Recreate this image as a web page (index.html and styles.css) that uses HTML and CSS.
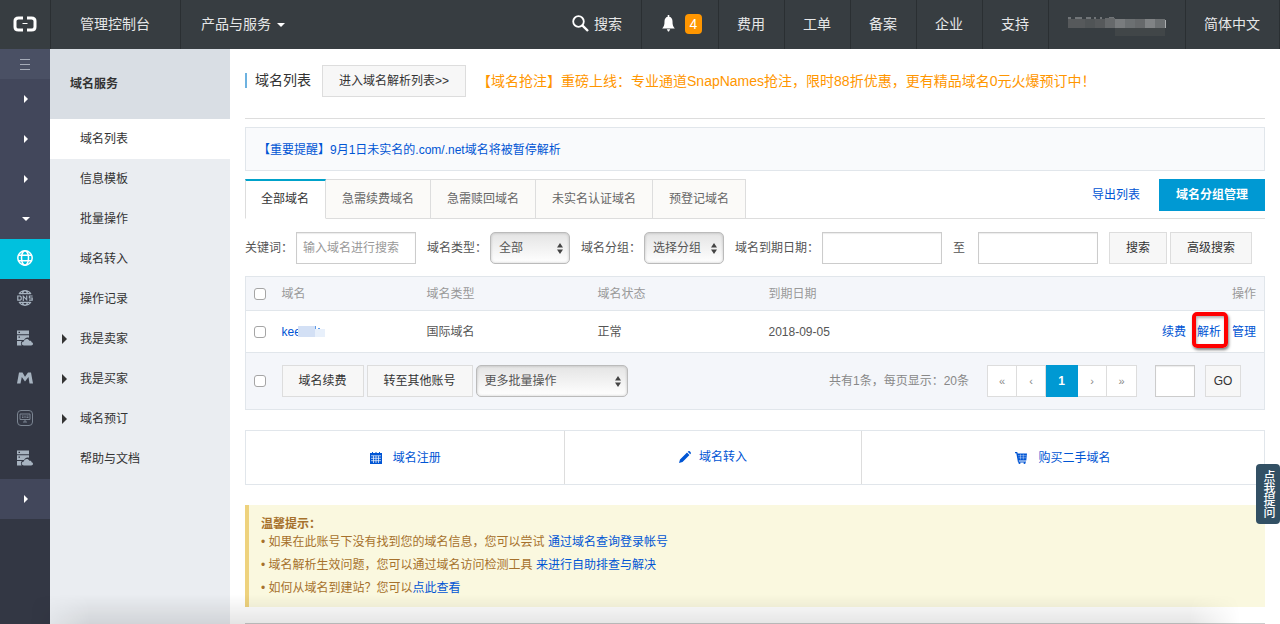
FILE: index.html
```html
<!DOCTYPE html>
<html lang="zh-CN">
<head>
    <meta charset="UTF-8">
    <meta name="viewport" content="width=device-width, initial-scale=1.0">
    <title>域名列表 - 管理控制台</title>
    <link rel="stylesheet" href="styles.css">
</head>
<body>
    <!-- shared icons -->
    <svg class="sprite" aria-hidden="true">
        <symbol id="icon-server" viewBox="0 0 16 16">
            <path fill="currentColor" fill-rule="evenodd" d="M0 .5h12v3.800H0zM1.500 1.800v1.300h1.500V1.800zM0 5.300h12v2.400c-2-.8-4.200.2-4.900 2.300H0zM1.500 6.500v1.300h1.500V6.500zM0 11h4.800c-1 1-1.200 3-.2 4.500H0z"/>
            <path fill="currentColor" d="M7 15.500c-3 0-3-3.800-.2-4 .5-3.200 4.700-3.400 5.500-.7 1.300-.5 2.300.3 2.300 1.500 2 .3 1.900 3.200-.5 3.200z"/>
        </symbol>
    </svg>

    <header class="topbar">
        <a href="#" class="topbar-item logo" aria-label="首页">
            <svg width="24" height="16" viewBox="0 0 24 16">
                <path fill="none" stroke="#fff" stroke-width="3" d="M10 2H5.500Q2 2 2 5v6q0 3 3.500 3H10M14 2h4.500Q22 2 22 5v6q0 3-3.500 3H14"/>
                <path fill="none" stroke="#fff" stroke-width="1" d="M9.500 7.500h5"/>
            </svg>
        </a>
        <a href="#" class="topbar-item console">管理控制台</a>
        <a href="#" class="topbar-item products">产品与服务<span class="caret-down"></span></a>
        <nav class="topbar-right">
            <a href="#" class="topbar-item search">
                <svg width="17" height="17" viewBox="0 0 17 17">
                    <circle cx="6.500" cy="6.500" r="5.300" fill="none" stroke="#fff" stroke-width="1.800"/>
                    <path d="M10.300 10.300L16 16" stroke="#fff" stroke-width="2.400"/>
                </svg>
                搜索
            </a>
            <a href="#" class="topbar-item message" aria-label="消息">
                <svg width="13" height="17" viewBox="0 0 13 17">
                    <path fill="#fff" d="M5.700 0h1.600v1.700c2.300.5 3.200 2.300 3.200 4.600 0 3.700.5 5 2.300 7.200H.2C2 11.300 2.500 10 2.500 6.300c0-2.300 1-4.100 3.200-4.600zM4.800 14.300h3.400L7 16.500H6z"/>
                </svg>
                <span class="badge">4</span>
            </a>
            <a href="#" class="topbar-item">费用</a>
            <a href="#" class="topbar-item">工单</a>
            <a href="#" class="topbar-item">备案</a>
            <a href="#" class="topbar-item">企业</a>
            <a href="#" class="topbar-item">支持</a>
            <a href="#" class="topbar-item account" aria-label="账号">
                <svg width="100" height="27" viewBox="0 -7 100 27">
                    <path d="M1 1h3M8 1h7M19 1h5M27 1h2M33 1h2M42 1h5" stroke="#aaadaf"/>
                    <path fill="#56595b" d="M1 2h17v9H1zM28 2h10v9H28z"/>
                    <path fill="#505456" d="M18 2h10v9H18z"/>
                    <path fill="#66696b" d="M38 1h10v10H38zM68 2h10v9H68z"/>
                    <path fill="#797c7e" d="M48 2h10v9H48z"/>
                    <path fill="#6c7072" d="M58 2h10v9H58zM88 2h10v9H88z"/>
                    <path fill="#808385" d="M78 2h10v9H78z"/>
                    <path fill="#414648" d="M48 11h50v8H48z"/>
                    <path d="M98.500 3v8" stroke="#aaadaf"/>
                </svg>
            </a>
            <a href="#" class="topbar-item lang">简体中文</a>
        </nav>
    </header>

    <div class="layout">
        <nav class="rail" aria-label="产品导航">
            <button class="rail-fold" type="button" aria-label="收起">
                <svg width="10" height="11" viewBox="0 0 10 11"><path d="M0 .5h10M0 5.500h10M0 10.500h10" stroke="#a5abb8"/></svg>
            </button>
            <a href="#" class="rail-group" aria-label="分组一"><span class="caret-right"></span></a>
            <a href="#" class="rail-group" aria-label="分组二"><span class="caret-right"></span></a>
            <a href="#" class="rail-group" aria-label="分组三"><span class="caret-right"></span></a>
            <a href="#" class="rail-group" aria-label="分组四"><span class="caret-down"></span></a>
            <a href="#" class="rail-item active" aria-label="域名">
                <svg width="16" height="16" viewBox="0 0 16 16" fill="none" stroke="currentColor" stroke-width="1.500">
                    <circle cx="8" cy="8" r="7.200"/>
                    <ellipse cx="8" cy="8" rx="3.500" ry="7.200"/>
                    <path d="M1.500 5.300h13M1.500 10.700h13"/>
                </svg>
            </a>
            <a href="#" class="rail-item" aria-label="DNS">
                <svg width="16" height="16" viewBox="0 0 16 16" fill="none" stroke="currentColor" stroke-width="1.200">
                    <path d="M2 4C3.300 2 5.300.7 8 .7S12.700 2 14 4M2 12c1.300 2 3.300 3.300 6 3.300s4.700-1.300 6-3.300M2.500 3.700h11M2.500 12.300h11M5.300 4c.5-1.800 1.400-3.300 2.700-3.300s2.200 1.500 2.700 3.300M5.300 12c.5 1.800 1.400 3.300 2.700 3.300s2.200-1.500 2.700-3.300"/>
                    <path d="M.8 6v4.200h2.400l1-1V7l-1-1zM6.300 11V6.200l3.400 3.600V5.500M15.600 6h-3.200v2h2.800v2.200h-3.200"/>
                </svg>
            </a>
            <a href="#" class="rail-item" aria-label="云虚拟主机"><svg width="16" height="16"><use href="#icon-server"/></svg></a>
            <a href="#" class="rail-item" aria-label="邮箱">
                <svg width="16" height="12" viewBox="0 0 16 12">
                    <path fill="currentColor" d="M0 11.500L2 .5h3.500L8 4.800 11 .5h3l2 11h-3.500L11.500 5 8 9.500 4.800 5 3.500 11.500z"/>
                </svg>
            </a>
            <a href="#" class="rail-item dim" aria-label="建站">
                <svg width="16" height="16" viewBox="0 0 16 16" fill="none" stroke="currentColor">
                    <rect x=".5" y=".5" width="15" height="15" rx="3.500"/>
                    <path d="M3 4h10v5.500H3zM5 6h1.500M5 7.500h1.500M8 5.500v2.500M9.500 6h2M9.500 7.500h2M6 12h4M8 10v2"/>
                </svg>
            </a>
            <a href="#" class="rail-item" aria-label="弹性主机"><svg width="16" height="16"><use href="#icon-server"/></svg></a>
            <a href="#" class="rail-group" aria-label="分组五"><span class="caret-right"></span></a>
        </nav>

        <aside class="sidebar">
            <h2>域名服务</h2>
            <ul>
                <li><a href="#" class="active">域名列表</a></li>
                <li><a href="#">信息模板</a></li>
                <li><a href="#">批量操作</a></li>
                <li><a href="#">域名转入</a></li>
                <li><a href="#">操作记录</a></li>
                <li><a href="#" class="has-sub">我是卖家</a></li>
                <li><a href="#" class="has-sub">我是买家</a></li>
                <li><a href="#" class="has-sub">域名预订</a></li>
                <li><a href="#">帮助与文档</a></li>
            </ul>
        </aside>

        <main class="content">
            <div class="page-head">
                <h1>域名列表</h1>
                <button class="btn" type="button">进入域名解析列表&gt;&gt;</button>
                <a href="#" class="promo">【域名抢注】重磅上线：专业通道SnapNames抢注，限时88折优惠，更有精品域名0元火爆预订中！</a>
            </div>

            <div class="alert"><a href="#">【重要提醒】9月1日未实名的.com/.net域名将被暂停解析</a></div>

            <div class="tabs">
                <a href="#" class="tab active">全部域名</a>
                <a href="#" class="tab">急需续费域名</a>
                <a href="#" class="tab">急需赎回域名</a>
                <a href="#" class="tab">未实名认证域名</a>
                <a href="#" class="tab">预登记域名</a>
                <div class="tabs-right">
                    <a href="#">导出列表</a>
                    <button class="btn btn-primary" type="button">域名分组管理</button>
                </div>
            </div>

            <form class="filter">
                <div class="field">
                    <label for="keyword">关键词：</label>
                    <input type="text" id="keyword" placeholder="输入域名进行搜索">
                </div>
                <div class="field">
                    <label for="type">域名类型：</label>
                    <select id="type"><option>全部</option></select>
                </div>
                <div class="field">
                    <label for="group">域名分组：</label>
                    <select id="group"><option>选择分组</option></select>
                </div>
                <div class="field">
                    <label for="dateFrom">域名到期日期：</label>
                    <input type="text" id="dateFrom">
                </div>
                <div class="field date-to">
                    <label for="dateTo">至</label>
                    <input type="text" id="dateTo">
                </div>
                <div class="field">
                    <button class="btn" type="button">搜索</button>
                    <button class="btn" type="button">高级搜索</button>
                </div>
            </form>

            <table class="domains">
                <thead>
                    <tr>
                        <th class="col-check"><input type="checkbox" aria-label="全选"></th>
                        <th class="col-name">域名</th>
                        <th class="col-info">域名类型</th>
                        <th class="col-info">域名状态</th>
                        <th class="col-info">到期日期</th>
                        <th class="col-action">操作</th>
                    </tr>
                </thead>
                <tbody>
                    <tr>
                        <td class="col-check"><input type="checkbox" aria-label="选择域名"></td>
                        <td><a href="#" class="domain">kee<svg width="27" height="13" viewBox="0 0 27 13"><path fill="#d3e0f5" d="M0 1h17v11H0z"/><path fill="#e8f0fb" d="M17 4h10v8H17z"/><path fill="#5f9be8" d="M17 1h1v3h-1zM20 3h2v1h-2z"/></svg></a></td>
                        <td>国际域名</td>
                        <td>正常</td>
                        <td>2018-09-05</td>
                        <td class="col-action">
                            <div class="actions">
                                <a href="#">续费</a>
                                <a href="#" class="marked">解析</a>
                                <a href="#">管理</a>
                            </div>
                        </td>
                    </tr>
                </tbody>
                <tfoot>
                    <tr>
                        <td class="col-check"><input type="checkbox" aria-label="全选本页"></td>
                        <td colspan="5">
                            <div class="table-foot">
                                <button class="btn" type="button">域名续费</button>
                                <button class="btn" type="button">转至其他账号</button>
                                <select class="batch" aria-label="更多批量操作"><option>更多批量操作</option></select>
                                <span class="total">共有1条，每页显示：20条</span>
                                <div class="pager">
                                    <a href="#">«</a>
                                    <a href="#">‹</a>
                                    <a href="#" class="active">1</a>
                                    <a href="#">›</a>
                                    <a href="#">»</a>
                                </div>
                                <input type="text" class="page-input" aria-label="页码">
                                <button class="btn btn-go" type="button">GO</button>
                            </div>
                        </td>
                    </tr>
                </tfoot>
            </table>

            <div class="shortcuts">
                <a href="#">
                    <svg width="12" height="12" viewBox="0 0 12 12">
                        <path fill="currentColor" d="M0 1h2V0h1v1h2.500V0h1v1H9V0h1v1h2v11H0z"/>
                        <path stroke="#fff" stroke-width=".7" d="M1 3.800h10M1 6.300h10M1 8.700h10M3.500 3.800V11M6 3.800V11M8.500 3.800V11"/>
                    </svg>
                    域名注册
                </a>
                <a href="#" class="transfer">
                    <svg width="12" height="12" viewBox="0 0 12 12">
                        <path fill="currentColor" d="M8 1.500L10.500 4l-7 7L0 12l1-3.500zM8.700.8q1.300-1.500 2.600-.1T11.200 3.300z"/>
                    </svg>
                    域名转入
                </a>
                <a href="#">
                    <svg width="12" height="12" viewBox="0 0 12 12">
                        <path fill="currentColor" d="M0 0h2.200l.5 1.500H12L11.300 8.500H3.800v1h7.200v1H3L1.300 1.200H0z"/>
                        <circle cx="4.500" cy="11" r="1" fill="currentColor"/>
                        <circle cx="9.500" cy="11" r="1" fill="currentColor"/>
                        <path stroke="#fff" stroke-width=".4" d="M3 3.700h8.500M3.500 5.800h7.800M5.500 2.300V7.500M8.300 2.300V7.500"/>
                    </svg>
                    购买二手域名
                </a>
            </div>

            <div class="notice">
                <strong>温馨提示：</strong>
                <ul>
                    <li>• 如果在此账号下没有找到您的域名信息，您可以尝试 <a href="#">通过域名查询登录帐号</a></li>
                    <li>• 域名解析生效问题，您可以通过域名访问检测工具 <a href="#">来进行自助排查与解决</a></li>
                    <li>• 如何从域名到建站？您可以<a href="#">点此查看</a></li>
                </ul>
            </div>
            <hr>
        </main>
    </div>

    <button class="ask" type="button">点我提问</button>
    <div class="bottom-shade"></div>
</body>
</html>
```

FILE: styles.css
```css
* {
    margin: 0;
    padding: 0;
    box-sizing: border-box;
}
body {
    font-family: "Liberation Sans", "Noto Sans CJK SC", sans-serif;
    font-size: 12px;
    line-height: 18px;
    color: #555;
    background: #fff;
    min-height: 100vh;
    display: flex;
    flex-direction: column;
}
a {
    color: #0055d4;
    text-decoration: none;
}
ul {
    list-style: none;
}
svg {
    flex: none;
}
button, input, select {
    font: inherit;
}
.sprite {
    position: absolute;
    width: 0;
    height: 0;
}

/* top bar */
.topbar {
    display: flex;
    height: 49px;
    background: #373d41;
    font-size: 14px;
}
.topbar-right {
    display: flex;
    margin-left: auto;
}
.topbar-item {
    display: flex;
    align-items: center;
    justify-content: center;
    padding: 0 19px 2px 18px;
    color: #e6e7e8;
    white-space: nowrap;
    border-right: 1px solid #2a2f32;
}
.logo {
    width: 51px;
    padding: 0 1px 2px 0;
}
.console {
    padding: 0 30px 2px 29px;
}
.products {
    padding-left: 20px;
    border-right: none;
}
.search {
    gap: 5px;
}
.message {
    gap: 10px;
    padding: 0 16px 2px 20px;
}
.badge {
    width: 17px;
    line-height: 20px;
    text-align: center;
    color: #fff;
    background: #ff9600;
    border-radius: 4px;
}
.account {
    padding: 0 18px 2px;
}
.caret-down {
    border: 4px solid transparent;
    border-top-color: #fff;
    border-bottom: none;
}
.caret-right {
    border: 4px solid transparent;
    border-left-color: #fff;
    border-right: none;
}
.products .caret-down {
    margin: 2px 0 0 6px;
}

.layout {
    display: flex;
    flex: 1;
}

/* icon rail */
.rail {
    width: 50px;
    flex: none;
    background: #333744;
}
.rail-fold, .rail-group, .rail-item {
    display: flex;
    align-items: center;
    justify-content: center;
    width: 100%;
    height: 40px;
}
.rail-fold {
    height: 30px;
    border: none;
    background: #4a5064;
}
.rail-group {
    padding-left: 2px;
    background: #42475b;
}
.rail-item {
    padding-bottom: 2px;
    color: #a7b3c0;
}
.rail-item.dim {
    color: #7b8491;
}
.rail-item.active {
    color: #fff;
    background: #00c1de;
}

/* product menu */
.sidebar {
    width: 180px;
    flex: none;
    background: #eaedf1;
}
.sidebar h2 {
    padding-left: 20px;
    font-size: 12px;
    line-height: 70px;
    color: #333;
    background: #d9dee4;
}
.sidebar a {
    display: flex;
    align-items: center;
    height: 40px;
    padding-left: 30px;
    color: #333;
}
.sidebar a.active {
    background: #fff;
}
.sidebar a.has-sub {
    padding-left: 12px;
}
.sidebar a.has-sub::before {
    content: "";
    margin-right: 13px;
    border: 5px solid transparent;
    border-left-color: #333;
    border-right: none;
}

/* content */
.content {
    flex: 1;
    min-width: 0;
    padding: 0 15px;
}
.btn {
    height: 32px;
    padding: 0 16px;
    color: #333;
    background: #f7f7f7;
    border: 1px solid #ddd;
    white-space: nowrap;
}
.btn-primary {
    color: #fff;
    font-weight: bold;
    background: #0099d3;
    border-color: #0099d3;
}
.page-head {
    display: flex;
    align-items: center;
    gap: 11px;
    height: 70px;
    padding-bottom: 6px;
    border-bottom: 1px solid #ddd;
}
.page-head h1 {
    padding-left: 8px;
    font-size: 14px;
    font-weight: normal;
    line-height: 15px;
    color: #333;
    border-left: 2px solid #6db2e0;
}
.promo {
    font-size: 14px;
    color: #ff9600;
    white-space: nowrap;
}
.alert {
    margin-top: 8px;
    padding: 13px 12px 11px;
    background: #f9fafc;
    border: 1px solid #e1e6eb;
}
.tabs {
    display: flex;
    margin-top: 8px;
    border-bottom: 1px solid #ddd;
}
.tab {
    height: 40px;
    margin-bottom: -1px;
    padding: 0 16px;
    line-height: 38px;
    color: #666;
    background: #fbfaf8;
    border: 1px solid #ddd;
    border-left: none;
    white-space: nowrap;
}
.tab.active {
    padding-left: 15px;
    line-height: 36px;
    color: #333;
    background: #fff;
    border-top: 2px solid #00a2ca;
    border-left: 1px solid #ddd;
    border-bottom-color: #fff;
}
.tabs-right {
    display: flex;
    align-items: center;
    align-self: flex-start;
    gap: 19px;
    margin-left: auto;
}

/* form controls */
input[type="text"], select {
    width: 120px;
    height: 32px;
    padding: 0 6px;
    color: #555;
    background: #fff;
    border: 1px solid #ccc;
    box-shadow: inset 0 1px 1px rgba(0, 0, 0, 0.08);
}
input::placeholder {
    color: #999;
}
select {
    width: 80px;
    padding: 0 8px;
    appearance: none;
    background: url("data:image/svg+xml,%3Csvg xmlns='http://www.w3.org/2000/svg' width='6' height='11'%3E%3Cpath fill='%23444' d='M3 0l3 4.500H0zM3 11L0 6.500h6z'/%3E%3C/svg%3E") no-repeat right 6px center, linear-gradient(#e4e4e4, #fff);
    border-color: #bbb;
    border-radius: 5px;
    box-shadow: inset 0 0 3px rgba(0, 0, 0, 0.2);
}
input[type="checkbox"] {
    display: block;
    width: 12px;
    height: 12px;
    appearance: none;
    background: #fff;
    border: 1px solid #a5a5a5;
    border-radius: 3px;
}
.filter {
    display: flex;
    align-items: center;
    gap: 11px;
    margin: 13px 0 12px;
}
.field {
    display: flex;
    align-items: center;
    gap: 3px;
}
.field.date-to {
    gap: 13px;
}

/* domain table */
.domains {
    width: 100%;
    table-layout: fixed;
    border-collapse: collapse;
    border: 1px solid #e1e6eb;
}
.domains th, .domains td {
    height: 42px;
    text-align: left;
    border-bottom: 1px solid #e1e6eb;
}
.domains th {
    height: 34px;
    font-weight: normal;
    color: #999;
}
.domains thead, .domains tfoot {
    background: #f4f6fa;
}
.domains .col-check {
    width: 36px;
    padding-left: 8px;
}
.col-name {
    width: 145px;
}
.col-info {
    width: 171px;
}
.domains .col-action {
    padding-right: 8px;
    text-align: right;
}
.domains tfoot td {
    height: 57px;
}
.domain {
    display: flex;
    align-items: center;
}
.domain svg {
    margin-left: -3px;
}
.actions {
    display: flex;
    justify-content: flex-end;
    gap: 11px;
}
.marked {
    position: relative;
}
.marked::after {
    content: "";
    position: absolute;
    inset: -11px -7px -7px -5px;
    border: 4px solid #f00;
    border-radius: 5px;
    box-shadow: 1px 2px 3px rgba(0, 0, 0, 0.5), inset 1px 2px 3px rgba(0, 0, 0, 0.3);
}
.table-foot {
    display: flex;
    align-items: center;
    gap: 3px;
    padding-right: 23px;
}
.table-foot .batch {
    width: 152px;
}
.total {
    margin-left: auto;
    color: #888;
}
.pager {
    display: flex;
    margin: 0 15px;
    font-size: 11px;
    line-height: 30px;
    background: #fff;
    border: 1px solid #ddd;
}
.pager a {
    width: 29px;
    text-align: center;
    color: #888;
    border-right: 1px solid #ddd;
}
.pager a:last-child {
    border-right: none;
}
.pager a.active {
    width: 32px;
    margin: -1px 0;
    padding: 1px 0;
    font-size: 12px;
    color: #fff;
    font-weight: bold;
    background: #0099d3;
    border-color: #0099d3;
}
.table-foot .page-input {
    width: 40px;
    margin-right: 7px;
}
.btn-go {
    width: 36px;
    padding: 0;
}

/* shortcut links */
.shortcuts {
    display: grid;
    grid-template-columns: 320fr 297fr 403fr;
    margin-top: 20px;
    border: 1px solid #e1e6eb;
}
.shortcuts a {
    display: flex;
    align-items: center;
    justify-content: center;
    gap: 11px;
    height: 53px;
    border-right: 1px solid #ddd;
}
.shortcuts a:last-child {
    border-right: none;
}
.shortcuts .transfer {
    gap: 8px;
    padding-bottom: 2px;
}

/* tips */
.notice {
    margin-top: 20px;
    padding: 10px 12px 5px;
    color: #a6712c;
    background: #faf8df;
    border-left: 4px solid #eed27d;
}
.notice strong {
    display: block;
}
.notice li {
    margin-bottom: 5px;
}
hr {
    margin-top: 16px;
    border: none;
    border-top: 1px solid #ccc;
}

.ask {
    position: fixed;
    right: 0;
    bottom: 100px;
    width: 24px;
    height: 60px;
    color: #fff;
    font-weight: 500;
    line-height: 22px;
    writing-mode: vertical-rl;
    background: #325064;
    border: none;
    border-radius: 4px;
}
.bottom-shade {
    position: fixed;
    left: 0;
    right: 0;
    bottom: 0;
    height: 30px;
    background: linear-gradient(transparent, rgba(0, 0, 0, 0.1));
    mask-image: linear-gradient(to right, transparent 30px, #000 90px, #000 calc(100% - 90px), transparent calc(100% - 40px));
    pointer-events: none;
}
```
